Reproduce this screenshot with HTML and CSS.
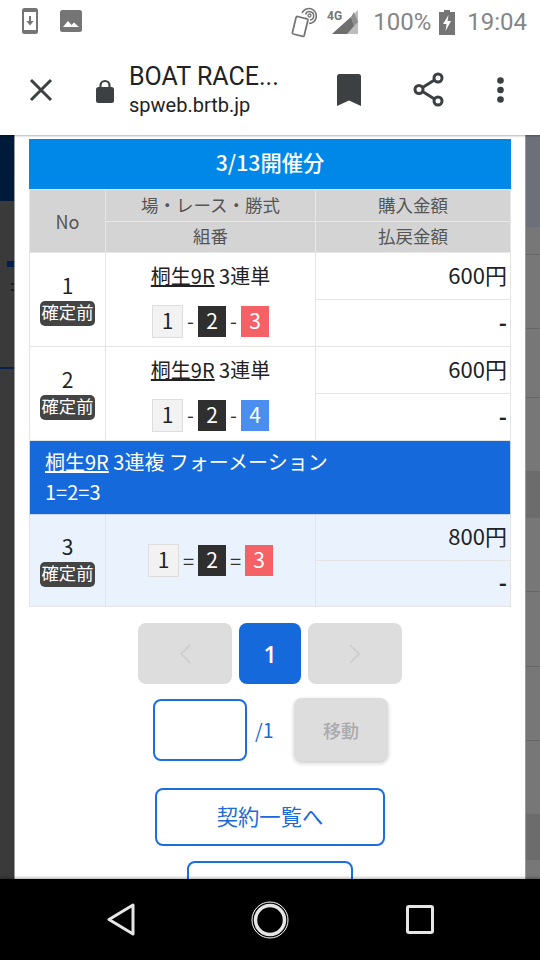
FILE: index.html
```html
<!DOCTYPE html>
<html lang="ja">
<head>
<meta charset="utf-8">
<title>BOAT RACE</title>
<link rel="stylesheet" href="styles.css">
</head>
<body>
<header class="top">
  <div class="status">
    <div class="status-left">
      <svg class="ic-dl" viewBox="0 0 16 26"><rect width="16" height="26" rx="2.5" fill="#757575"/><rect x="2" y="4" width="12" height="18" fill="#fff"/><path d="M7 8h2v5h2.6L8 17.5 4.4 13H7z" fill="#757575"/></svg>
      <svg class="ic-img" viewBox="0 0 22 22"><rect width="22" height="22" rx="2.5" fill="#757575"/><path d="M3 17l5-6 3.500 4 2.500-2.500L19 17z" fill="#fff"/></svg>
    </div>
    <div class="status-right">
      <svg class="ic-nfc" viewBox="0 0 29 31"><g fill="none" stroke="#757575" stroke-width="1.600"><path d="M7.500 9.500l9.500 2.300c.7.2 1 .8.9 1.400l-3.700 15.200c-.2.7-.8 1-1.400.9l-9.500-2.300c-.7-.2-1-.8-.9-1.400L6.100 10.400c.2-.7.8-1 1.400-.9z" stroke-width="1.800"/><path d="M19 16.500a7.500 7.500 0 1 0-7-10.500"/><path d="M20 13a4.200 4.200 0 1 0-4.500-5.500" stroke-width="1.500"/><circle cx="19.500" cy="8.500" r="1.500" stroke-width="1.300"/></g></svg>
      <svg class="ic-sig" viewBox="0 0 32 26"><path d="M31 1v24H5L24 8z" fill="#bdbdbd"/><path d="M5 25L24 8l3 9-7 8z" fill="#6e6e6e"/><path d="M24 8l3 9 4-4-4-10z" fill="#8e8e8e"/><text x="0" y="11" class="sig-text">4G</text></svg>
      <span class="pct">100%</span>
      <svg class="ic-bat" viewBox="0 0 16 25"><path d="M5 0h6v2h5v23H0V2h5z" fill="#757575"/><path d="M9.500 5L4 14h3.500l-1 7L12 11H8.500z" fill="#fff"/></svg>
      <span class="clock">19:04</span>
    </div>
  </div>
  <div class="toolbar">
    <svg class="ic-x" viewBox="0 0 24 24"><path d="M2 2l20 20M22 2L2 22" stroke="#3c4043" stroke-width="3" fill="none"/></svg>
    <svg class="ic-lock" viewBox="0 0 18 24"><path d="M4.500 9V6.500a4.500 4.500 0 0 1 9 0V9" fill="none" stroke="#3c4043" stroke-width="2.200"/><rect y="8" width="18" height="16" rx="2.500" fill="#3c4043"/></svg>
    <div class="page-title">
      <div class="title-main">BOAT RACE...</div>
      <div class="title-sub">spweb.brtb.jp</div>
    </div>
    <svg class="ic-mark" viewBox="0 0 24 32"><path d="M0 2.500A2.500 2.500 0 0 1 2.500 0h19A2.500 2.500 0 0 1 24 2.500V32l-12-5.500L0 32z" fill="#3c4043"/></svg>
    <svg class="ic-share" viewBox="0 0 31 35"><g fill="none" stroke="#3c4043" stroke-width="3"><circle cx="25" cy="6" r="4"/><circle cx="6" cy="17.500" r="4"/><circle cx="25" cy="29" r="4"/><path d="M9.500 15.500l12-7.500M9.500 19.500l12 7.500"/></g></svg>
    <svg class="ic-dots" viewBox="0 0 7 26"><circle cx="3.500" cy="3.500" r="3.300" fill="#3c4043"/><circle cx="3.500" cy="13" r="3.300" fill="#3c4043"/><circle cx="3.500" cy="22.500" r="3.300" fill="#3c4043"/></svg>
  </div>
</header>

<main class="stage">
  <div class="side side-left"></div>
  <section class="modal">
    <h2 class="day">3/13開催分</h2>
    <table class="bets">
      <colgroup><col class="c-no"><col class="c-race"><col class="c-amt"></colgroup>
      <thead>
        <tr><th rowspan="2" class="th-no">No</th><th>場・レース・勝式</th><th>購入金額</th></tr>
        <tr><th>組番</th><th>払戻金額</th></tr>
      </thead>
      <tbody>
        <tr class="half">
          <td rowspan="2"><div class="no">1</div><span class="badge">確定前</span></td>
          <td rowspan="2" class="race">
            <div class="race-name"><u>桐生9R</u> 3連単</div>
            <div class="combo"><span class="bx b1">1</span><span class="sep">-</span><span class="bx b2">2</span><span class="sep">-</span><span class="bx b3">3</span></div>
          </td>
          <td class="amt">600円</td>
        </tr>
        <tr class="half"><td class="amt pay">-</td></tr>
        <tr class="half">
          <td rowspan="2"><div class="no">2</div><span class="badge">確定前</span></td>
          <td rowspan="2" class="race">
            <div class="race-name"><u>桐生9R</u> 3連単</div>
            <div class="combo"><span class="bx b1">1</span><span class="sep">-</span><span class="bx b2">2</span><span class="sep">-</span><span class="bx b4">4</span></div>
          </td>
          <td class="amt">600円</td>
        </tr>
        <tr class="half"><td class="amt pay">-</td></tr>
        <tr class="group">
          <td colspan="3"><u>桐生9R</u> 3連複 フォーメーション<br>1=2=3</td>
        </tr>
        <tr class="half tint">
          <td rowspan="2"><div class="no">3</div><span class="badge">確定前</span></td>
          <td rowspan="2" class="race">
            <div class="combo"><span class="bx b1">1</span><span class="sep eq">=</span><span class="bx b2">2</span><span class="sep eq">=</span><span class="bx b3">3</span></div>
          </td>
          <td class="amt">800円</td>
        </tr>
        <tr class="half tint"><td class="amt pay">-</td></tr>
      </tbody>
    </table>

    <nav class="pager">
      <span class="pg pg-off"><svg class="chev" viewBox="0 0 12 20"><path d="M11 1L2 10l9 9" fill="none" stroke="#cfcfcf" stroke-width="1.800"/></svg></span>
      <span class="pg-on">1</span>
      <span class="pg pg-off"><svg class="chev" viewBox="0 0 12 20"><path d="M1 1l9 9-9 9" fill="none" stroke="#cfcfcf" stroke-width="1.800"/></svg></span>
    </nav>
    <div class="jump">
      <input class="jump-input" type="text" aria-label="page">
      <span class="jump-total">/1</span>
      <button class="jump-btn" type="button">移動</button>
    </div>
    <a class="btn-list">契約一覧へ</a>
    <a class="btn-next"></a>
  </section>
  <div class="side side-right"></div>
</main>

<footer class="navbar">
  <svg class="ic-back" viewBox="0 0 28 33"><path d="M26 2v29L2 16.500z" fill="none" stroke="#e6e6e6" stroke-width="3" stroke-linejoin="round"/></svg>
  <svg class="ic-home" viewBox="0 0 38 38"><circle cx="19" cy="19" r="18" fill="none" stroke="#fff" stroke-width="1"/><circle cx="19" cy="19" r="14.500" fill="none" stroke="#e6e6e6" stroke-width="3.500"/></svg>
  <svg class="ic-recent" viewBox="0 0 28 29"><rect x="1.500" y="1.500" width="25" height="26" rx="1.500" fill="none" stroke="#e6e6e6" stroke-width="3"/></svg>
</footer>
</body>
</html>
```
FILE: styles.css
```css
* { box-sizing: border-box; }
html, body { margin: 0; padding: 0; }
body {
  width: 540px;
  height: 960px;
  overflow: hidden;
  display: flex;
  flex-direction: column;
  background: #000;
  font-family: "Noto Sans CJK JP", sans-serif;
  color: #222;
}
svg { display: block; flex: none; }

/* header */
.top { height: 135px; background: #fff; position: relative; z-index: 2; box-shadow: 0 1px 2px rgba(0,0,0,.3); flex: none; }
.status { height: 44px; display: flex; justify-content: space-between; align-items: center; padding: 0 13px 0 22px; font-family: Roboto, sans-serif; color: #858585; }
.status-left, .status-right { display: flex; align-items: center; }
.status-left { margin-top: -2px; }
.ic-dl { width: 16px; height: 26px; }
.ic-img { width: 22px; height: 22px; margin-left: 22px; }
.ic-nfc { width: 29px; height: 31px; }
.ic-sig { width: 32px; height: 26px; margin-left: 8px; }
.sig-text { font: 700 12px Roboto, sans-serif; fill: #757575; }
.pct { font-size: 24px; margin-left: 14px; }
.ic-bat { width: 16px; height: 25px; margin-left: 8px; }
.clock { font-size: 24px; margin-left: 12px; }

.toolbar { height: 91px; display: flex; align-items: center; padding-left: 29px; }
.ic-x { width: 24px; height: 24px; }
.ic-lock { width: 18px; height: 24px; margin-left: 43px; margin-top: 2px; }
.page-title { width: 208px; margin-left: 15px; font-family: Roboto, sans-serif; color: #222; }
.title-main { font-size: 25px; line-height: 30px; }
.title-sub { font-size: 20px; line-height: 26px; }
.ic-mark { width: 24px; height: 32px; }
.ic-share { width: 31px; height: 35px; margin-left: 52px; }
.ic-dots { width: 7px; height: 26px; margin-left: 53px; }

/* stage */
.stage { height: 744px; display: flex; overflow: hidden; background: #777; flex: none; }
.side { width: 15px; flex: none; }
.side-left {
  border-right: 1px solid #999;
  background:
    linear-gradient(#001a3a, #001a3a) 0 0 / 100% 66px no-repeat,
    linear-gradient(#00204e, #00204e) 7px 126px / 8px 6px no-repeat,
    linear-gradient(#1c1c1c, #1c1c1c) 11px 148px / 4px 2px no-repeat,
    linear-gradient(#1c1c1c, #1c1c1c) 11px 154px / 4px 2px no-repeat,
    linear-gradient(#06214d, #06214d) 0 232px / 100% 2px no-repeat,
    #3a3a3a;
}
.side-right {
  border-left: 1px solid #999;
  background:
    linear-gradient(#6d7078, #6d7078) 0 0 / 100% 92px no-repeat,
    linear-gradient(#666, #666) 0 119px / 100% 1px no-repeat,
    linear-gradient(#666, #666) 0 193px / 100% 1px no-repeat,
    linear-gradient(#666, #666) 0 262px / 100% 1px no-repeat,
    linear-gradient(#6c6c6c, #6c6c6c) 0 336px / 100% 47px no-repeat,
    linear-gradient(#666, #666) 0 456px / 100% 1px no-repeat,
    linear-gradient(#666, #666) 0 531px / 100% 1px no-repeat,
    linear-gradient(#666, #666) 0 605px / 100% 1px no-repeat,
    linear-gradient(#6c6c6c, #6c6c6c) 0 679px / 100% 46px no-repeat,
    #777;
}
.modal { width: 510px; flex: none; background: #fff; padding: 4px 14px 0; overflow: hidden; }

.day { margin: 0; height: 50px; background: #0088e8; color: #fff; font-size: 21.300px; font-weight: 500; line-height: 45px; text-align: center; }

/* table */
.bets { width: 481px; table-layout: fixed; border-collapse: collapse; border: 1px solid #e4e4e4; font-size: 21px; }
.c-no { width: 76px; }
.c-race { width: 210px; }
.c-amt { width: 195px; }
.bets th { background: #d4d4d4; color: #555; font-weight: 400; font-size: 17.500px; height: 31px; padding: 0 0 2px; border: 1px solid #e6e6e6; line-height: 1; }
.bets thead tr:first-child th { height: 32px; }
.bets .th-no { font-size: 18px; padding: 0; }
.bets td { border: 1px solid #e4e4e4; padding: 0; text-align: center; }
.half td { height: 47px; }
.no { font-size: 21px; height: 28px; line-height: 24px; }
.badge { display: block; width: 55px; height: 25px; margin: 0 auto; background: #444; color: #fff; border-radius: 5px; font-size: 17.300px; line-height: 22px; }
.race-name { font-size: 20px; line-height: 28px; }
.combo { display: flex; justify-content: center; align-items: center; height: 33px; margin-top: 15px; }
.tint .combo { margin-top: 0; }
.race { padding-bottom: 4px; }
.tint .race { padding-bottom: 0; }
.bx { display: block; height: 31px; width: 28px; font-size: 21px; line-height: 28px; color: #fff; text-align: center; }
.b1 { width: 31px; height: 33px; background: #f2f2f2; border: 1px solid #ddd; color: #222; line-height: 28px; }
.b2 { background: #2f2f2f; }
.b3 { background: #f46265; }
.b4 { background: #4a8ef0; }
.sep { width: 15px; font-size: 20px; line-height: 28px; text-align: center; color: #333; }
.eq { width: 19px; }
.bets .amt { text-align: right; padding: 0 3px 5px 0; font-size: 22px; }
.bets .pay { font-weight: 700; }
.bets .group td { height: 74px; background: #1669db; color: #fff; text-align: left; padding: 0 0 2px 15px; font-size: 20px; line-height: 30px; border: 1px solid #c9d7ea; }
.tint td { background: #eaf2fd; height: 46px; }

/* pager */
.pager { display: flex; justify-content: center; gap: 7px; margin-top: 16px; }
.pg, .pg-on { height: 61px; border-radius: 8px; display: flex; align-items: center; justify-content: center; }
.pg { width: 94px; background: #ddd; }
.pg-on { width: 62px; background: #1669db; color: #fff; font-family: "Open Sans", sans-serif; font-size: 23px; font-weight: 600; }
.chev { width: 12px; height: 20px; }
.jump { display: flex; align-items: center; margin-top: 14px; padding-left: 124px; }
.jump-input { width: 94px; height: 62px; border: 2px solid #1a6fe0; border-radius: 8px; background: #fff; padding: 0; }
.jump-total { width: 47px; padding-left: 8px; font-size: 19.500px; color: #1a6adb; }
.jump-btn { width: 94px; height: 63px; border: 0; border-radius: 8px; background: #ddd; color: #aaa; font: 500 18px "Noto Sans CJK JP", sans-serif; box-shadow: 0 2px 4px rgba(0,0,0,.22); padding: 0; }
.btn-list { display: block; width: 230px; height: 58px; margin: 27px 0 0 126px; border: 2px solid #1a6fe0; border-radius: 8px; color: #1a6adb; font-size: 21.300px; line-height: 52px; text-align: center; }
.btn-next { display: block; width: 166px; height: 58px; margin: 15px 0 0 158px; border: 2px solid #1a6fe0; border-radius: 8px; }

/* nav bar */
.navbar { height: 81px; background: #000; display: flex; align-items: center; position: relative; z-index: 2; box-shadow: 0 -1px 3px rgba(0,0,0,.35); flex: none; padding: 0 0 0 107px; }
.ic-back { width: 28px; height: 33px; }
.ic-home { width: 38px; height: 38px; margin-left: 116px; }
.ic-recent { width: 28px; height: 29px; margin-left: 117px; }
```
